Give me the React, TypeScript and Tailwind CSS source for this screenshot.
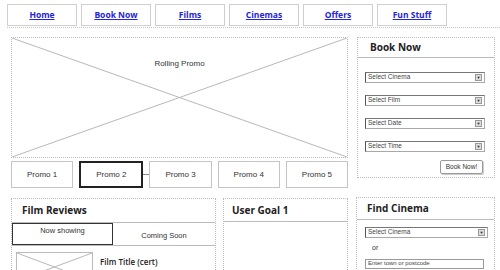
import React from "react";

const navItems = ["Home", "Book Now", "Films", "Cinemas", "Offers", "Fun Stuff"];
const promos = ["Promo 1", "Promo 2", "Promo 3", "Promo 4", "Promo 5"];

function Cross() {
  return (
    <svg
      className="absolute inset-0 h-full w-full"
      viewBox="0 0 100 100"
      preserveAspectRatio="none"
    >
      <line x1="0" y1="0" x2="100" y2="100" stroke="#b8b8b8" strokeWidth="1" vectorEffect="non-scaling-stroke" />
      <line x1="100" y1="0" x2="0" y2="100" stroke="#b8b8b8" strokeWidth="1" vectorEffect="non-scaling-stroke" />
    </svg>
  );
}

function Select({ label, width }: { label: string; width: string }) {
  return (
    <div
      className={`flex h-[11px] items-center justify-between border border-[#a8a8a8] border-l-[#555] border-t-[#777] bg-white pl-[2px] pr-[2px] ${width}`}
    >
      <span className="text-[6.5px] leading-none text-[#444]">{label}</span>
      <span className="flex h-[7px] w-[7px] items-center justify-center border border-[#999] bg-[#ddd] text-[4px] leading-none text-[#222]">
        ▼
      </span>
    </div>
  );
}

function PanelHeader({ title, className }: { title: string; className: string }) {
  return (
    <div className={`flex items-center border-b border-[#bbb] font-['Open_Sans'] text-[10px] font-bold text-[#222] ${className}`}>
      {title}
    </div>
  );
}

export default function App() {
  return (
    <div className="h-[270px] w-[500px] overflow-hidden bg-white font-['Liberation_Sans',Arial,sans-serif]">
      {/* top nav */}
      <nav className="ml-[7px] flex gap-[4px] border-b border-dotted border-[#c8c8c8] pb-[1px] pt-[4px]">
        {navItems.map((n) => (
          <div
            key={n}
            className="flex h-[22px] w-[70px] items-center justify-center border border-[#cfcfcf] font-['Open_Sans'] text-[8.5px] font-bold text-[#2424d8] underline"
          >
            {n}
          </div>
        ))}
      </nav>

      {/* promo + book now */}
      <div className="flex gap-[9px] pl-[11px] pt-[9px]">
        <div className="w-[337px]">
          <div className="relative h-[121px] border border-dotted border-[#bcbcbc]">
            <Cross />
            <div className="relative pt-[20px] text-center text-[8px] text-[#333]">Rolling Promo</div>
          </div>
          <div className="mt-[3px] flex items-center">
            {promos.map((p, i) => (
              <React.Fragment key={p}>
                {i > 0 && (
                  <div className={`h-px w-[6px] ${i === 2 ? "bg-[#888]" : ""}`} />
                )}
                <div
                  className={`flex h-[27px] flex-1 items-center justify-center text-[8px] text-[#333] ${
                    i === 1 ? "border-2 border-[#222]" : "border border-[#c4c4c4]"
                  }`}
                >
                  {p}
                </div>
              </React.Fragment>
            ))}
          </div>
        </div>

        <div className="h-[141px] w-[138px] border border-dotted border-[#bcbcbc]">
          <PanelHeader title="Book Now" className="h-[20px] pl-[12px]" />
          <div className="flex flex-col gap-[12px] pl-[7px] pt-[14px]">
            <Select label="Select Cinema" width="w-[120px]" />
            <Select label="Select Film" width="w-[120px]" />
            <Select label="Select Date" width="w-[120px]" />
            <Select label="Select Time" width="w-[120px]" />
          </div>
          <div className="flex justify-end pr-[11px] pt-[8px]">
            <div className="flex h-[14px] w-[43px] items-center justify-center rounded-[2px] border border-[#999] text-[6.5px] text-[#333] shadow-[1px_1px_0_#ccc]">
              Book Now!
            </div>
          </div>
        </div>
      </div>

      {/* bottom row */}
      <div className="flex pl-[11px] pt-[10px]">
        <div className="h-[80px] w-[205px] border border-dotted border-[#bcbcbc]">
          <PanelHeader title="Film Reviews" className="h-[24px] pl-[10px]" />
          <div className="flex h-[23px] border-b border-[#bbb]">
            <div className="flex w-[101px] justify-center border border-[#333] pt-[1px] text-[7.5px] text-[#333]">
              Now showing
            </div>
            <div className="flex flex-1 items-center justify-center pt-[3px] text-[7.5px] text-[#333]">
              Coming Soon
            </div>
          </div>
          <div className="flex gap-[7px] pl-[4px] pt-[6px]">
            <div className="relative h-[30px] w-[77px] border border-[#bbb]">
              <Cross />
            </div>
            <div className="pt-[4px] font-['Open_Sans'] text-[8px] font-semibold text-[#222]">Film Title (cert)</div>
          </div>
        </div>

        <div className="ml-[7px] h-[80px] w-[125px] border border-dotted border-[#bcbcbc]">
          <PanelHeader title="User Goal 1" className="h-[23px] pl-[8px]" />
        </div>

        <div className="ml-[8px] h-[80px] w-[139px] -translate-y-[1px] border border-dotted border-[#bcbcbc]">
          <PanelHeader title="Find Cinema" className="h-[22px] pl-[10px]" />
          <div className="pl-[8px] pt-[7px]">
            <Select label="Select Cinema" width="w-[123px]" />
            <div className="pl-[7px] pt-[5px] text-[7px] text-[#333]">or</div>
            <div className="mt-[5px] flex h-[10px] w-[119px] items-center border border-[#999] pl-[2px] text-[6px] text-[#444]">
              Enter town or postcode
            </div>
          </div>
        </div>
      </div>
    </div>
  );
}
